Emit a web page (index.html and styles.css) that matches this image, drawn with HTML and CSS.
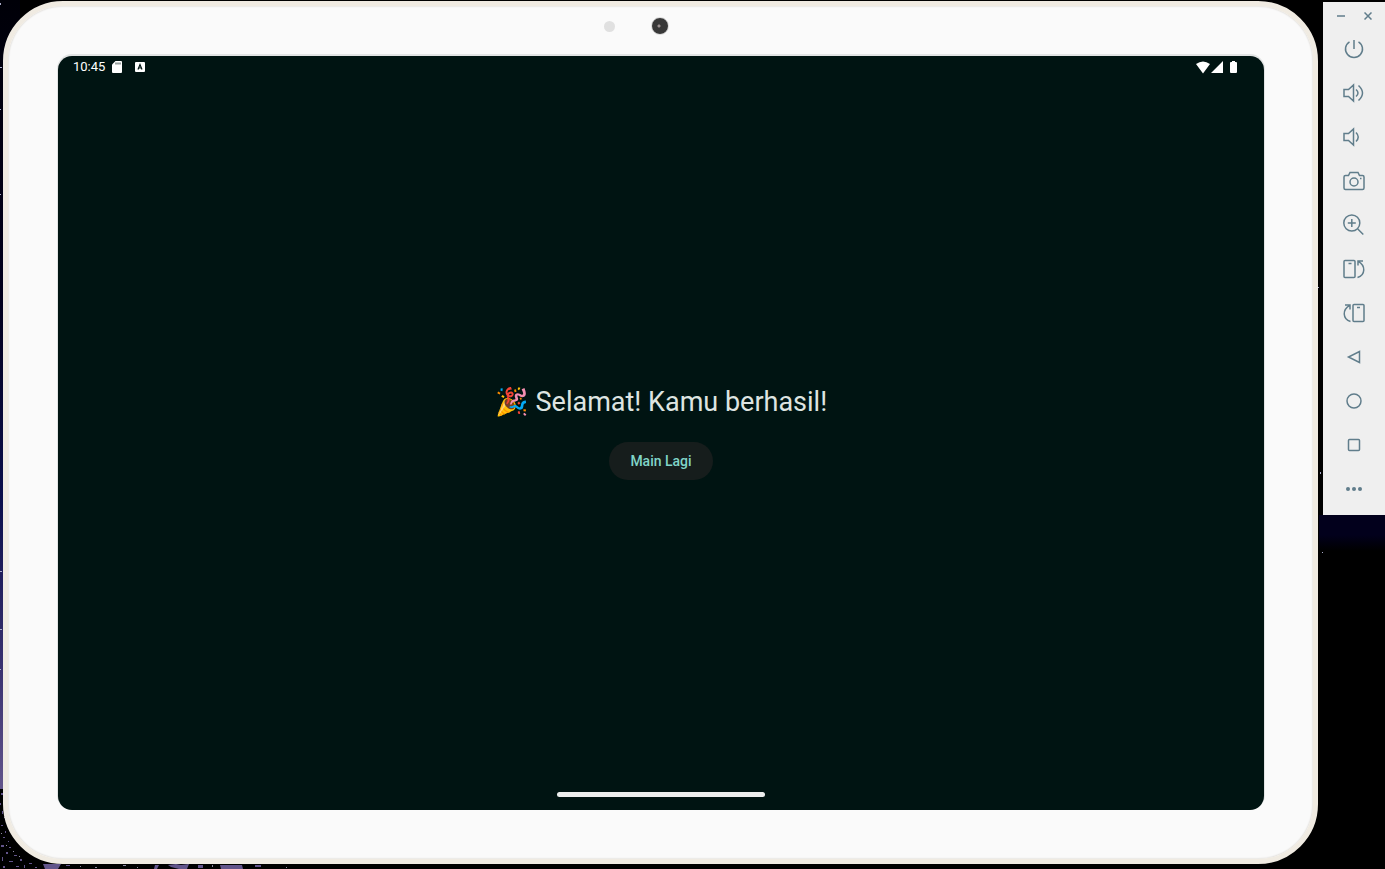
FILE: index.html
```
<!DOCTYPE html>
<html lang="id">
<head>
<meta charset="utf-8">
<title>Emulator</title>
<link rel="stylesheet" href="styles.css">
</head>
<body>
<div class="wallpaper" aria-hidden="true">
  <svg class="ground" viewBox="0 0 1320 84" width="1320" height="84">
    <g fill="#62548a">
      <path d="M43 79h18l-3 5H45zM168 80l8-1 5 1 8-1-2 5h-8l-8-2zM220 80h22l1 4h-22zM198 80h5v3h-5zM155 80h4l-2 4h-3zM66 80h4v1h-4zM255 80h6v2h-6z"/>
      <path d="M1 8h2v2H1zM0 18h1v2H0zM2 26h1v3H2zM1 40h2v1H1zM5 46h1v2H5zM3 52h2v1H3zM8 56h1v1H8zM1 60h3v2H1zM9 62h2v1H9zM6 67h2v2H6zM14 70h3v1h-3zM2 72h1v4H2zM20 74h2v2h-2zM9 76h4v1H9zM29 78h3v1h-3zM16 81h3v1h-3zM35 82h2v1h-2zM3 81h2v2H3zM24 80h1v3h-1z"/>
    </g>
    <g fill="#8c88a0">
      <path d="M4 32h1v1H4zM1 48h1v1H1zM6 60h1v1H6zM13 66h1v1h-1zM19 71h1v1h-1zM80 81h1v1h-1zM95 82h2v1h-2zM123 80h3v1h-3zM137 82h1v1h-1zM212 80h1v2h-1zM286 82h1v1h-1z"/>
    </g>
  </svg>
  <svg class="stars" viewBox="0 0 3 700" width="3" height="700">
    <path fill="#a9abc8" d="M0 3h1v2H0zM0 67h2v1H0zM0 109h1v1H0zM0 194h1v1H0zM0 571h2v1H0zM0 629h2v1H0zM0 669h1v1H0z"/>
  </svg>
  <svg class="stars-right" viewBox="0 0 6 560" width="6" height="560">
    <path fill="#a9abc8" d="M0 287h1v1H0zM2 472h1v2H2zM4 552h1v1H4z"/>
  </svg>
</div>

<main class="tablet">
  <span class="sensor"></span>
  <span class="camera"></span>
  <section class="screen">
    <header class="status">
      <span class="clock">10:45</span>
      <svg class="sd" viewBox="0 0 10 12" width="10" height="12"><path fill="#fff" d="M3.500 0H9q1 0 1 1v10q0 1-1 1H1q-1 0-1-1V3.500z"/><path stroke="#001412" stroke-width=".8" d="M4 1.500v2M6 1.500v2M8 1.500v2"/></svg>
      <svg class="badge" viewBox="0 0 10 10" width="10" height="10"><rect width="10" height="10" rx="1" fill="#fff"/><path d="M3 7.500 5 2.500l2 5M3.700 6h2.600" fill="none" stroke="#001412" stroke-width="1.200"/></svg>
      <svg class="signals" viewBox="0 0 42 13" width="42" height="13" fill="#fff"><path d="M0 3Q7-2 14 3L7 12.500zM27 0v12H15zM35 1h1V0h3v1h1q1 0 1 1v9q0 1-1 1h-5q-1 0-1-1V2q0-1 1-1z"/></svg>
    </header>
    <div class="result">
      <h1 class="message"><span class="emoji">🎉</span> Selamat! Kamu berhasil!</h1>
      <button class="again" type="button">Main Lagi</button>
    </div>
    <div class="home-bar"></div>
  </section>
</main>

<aside class="toolbar">
  <div class="window-controls">
    <button type="button" aria-label="Minimize"><svg viewBox="0 0 8 8" width="8" height="8"><path d="M0 4h8"/></svg></button>
    <button type="button" aria-label="Close"><svg viewBox="0 0 8 8" width="8" height="8"><path d="M.5.5l7 7M7.500.5l-7 7"/></svg></button>
  </div>
  <button class="tool" type="button" aria-label="Power"><svg viewBox="0 0 24 24"><path d="M12 3v9M7.500 4.800a8.500 8.500 0 1 0 9 0"/></svg></button>
  <button class="tool" type="button" aria-label="Volume up"><svg viewBox="0 0 24 24"><path d="M2 8.500h4.500L11.500 4v16l-5-4.500H2zM14 8.500q4 3.500 0 7M16.500 4.500q8 7.500 0 15"/></svg></button>
  <button class="tool" type="button" aria-label="Volume down"><svg viewBox="0 0 24 24"><path d="M2 8.500h4.500L11.500 4v16l-5-4.500H2zM14 7.500q4.500 4.500 0 9"/></svg></button>
  <button class="tool" type="button" aria-label="Screenshot"><svg viewBox="0 0 24 24"><path d="M3.500 6.500h3l1.500-3h8l1.500 3h3q1.500 0 1.500 1.500v11q0 1.500-1.500 1.500h-17Q2 20.500 2 19V8q0-1.500 1.500-1.500z"/><circle cx="12" cy="13" r="4"/><path d="M18 9.500h1.500"/></svg></button>
  <button class="tool" type="button" aria-label="Zoom"><svg viewBox="0 0 24 24"><circle cx="9.800" cy="10" r="8"/><path d="M15.800 16l5.500 5.500M9.800 6v8M5.800 10h8"/></svg></button>
  <button class="tool" type="button" aria-label="Rotate left"><svg viewBox="0 0 24 24"><rect x="2" y="3.500" width="11" height="17" rx="1"/><path d="M6.500 6.500h3M16 8.500V4h5M16 4.300c8 4 7.500 14-.5 16.200"/></svg></button>
  <button class="tool" type="button" aria-label="Rotate right"><svg viewBox="0 0 24 24"><rect x="11" y="3.500" width="11" height="17" rx="1"/><path d="M15 6.500h3M8 8.500V4H3M8 4.300c-8 4-7.500 14 .5 16.200"/></svg></button>
  <button class="tool" type="button" aria-label="Back"><svg viewBox="0 0 24 24"><path d="M17.500 6.500v11L6.500 12z"/></svg></button>
  <button class="tool" type="button" aria-label="Home"><svg viewBox="0 0 24 24"><circle cx="12" cy="12" r="7"/></svg></button>
  <button class="tool" type="button" aria-label="Overview"><svg viewBox="0 0 24 24"><rect x="6.500" y="6.500" width="11" height="11" rx="1"/></svg></button>
  <button class="tool" type="button" aria-label="More"><svg viewBox="0 0 24 24"><g fill="#607d8b" stroke="none"><circle cx="6" cy="12" r="2"/><circle cx="12" cy="12" r="2"/><circle cx="18" cy="12" r="2"/></g></svg></button>
</aside>
</body>
</html>
```
FILE: styles.css
```
* {
  box-sizing: border-box;
}

body {
  display: flex;
  gap: 5px;
  height: 100vh;
  margin: 0;
  padding: 1px 0 5px 3px;
  overflow: hidden;
  background: #000;
  font-family: Roboto, sans-serif;
}

button {
  padding: 0;
  border: 0;
  background: none;
  cursor: pointer;
}

svg {
  display: block;
}

.wallpaper {
  position: absolute;
  inset: 0;
  z-index: -1;
  overflow: hidden;
  background:
    linear-gradient(#02001c, #02001c 20px, #000 36px) right 515px / 66px 60px no-repeat,
    linear-gradient(#000008, #02001c 300px, #0b0f4c 500px, #3a3270 670px, #62548a) left top / 20px 789px no-repeat;
}

.ground {
  position: absolute;
  left: 0;
  bottom: 0;
}

.stars {
  position: absolute;
  left: 0;
  top: 0;
}

.stars-right {
  position: absolute;
  right: 61px;
  top: 0;
}

.tablet {
  position: relative;
  display: flex;
  flex: 1;
  padding: 50px 49px 49px 50px;
  border: 5px solid #f0ebe2;
  border-radius: 60px;
  background: #fafafa;
  box-shadow: inset 0 0 2px #c8c4bc;
}

.sensor,
.camera {
  position: absolute;
  border-radius: 50%;
}

.sensor {
  top: 15px;
  left: calc(50% - 57px);
  width: 11px;
  height: 11px;
  background: #e0e0e0;
}

.camera {
  top: 11px;
  left: calc(50% - 10px);
  width: 18px;
  height: 18px;
  border: 1px solid #dcdcdc;
  background: radial-gradient(circle at 7px 8px, #9a9090 1px, #383838 2px);
}

.screen {
  display: flex;
  flex: 1;
  flex-direction: column;
  border-radius: 14px;
  background: #001412;
  box-shadow: 0 -1px 0 1px #e2e4e4;
}

.status {
  display: flex;
  align-items: center;
  height: 22px;
  padding: 0 26px 0 15px;
  color: #fff;
  font-size: 13px;
  line-height: 22px;
}

.sd {
  margin-left: 7px;
}

.badge {
  margin-left: 13px;
}

.signals {
  margin-left: auto;
}

.result {
  display: flex;
  flex: 1;
  flex-direction: column;
  align-items: center;
  justify-content: center;
  gap: 22px;
  padding-bottom: 6px;
}

.message {
  margin: 0;
  color: #dee4e1;
  font-size: 27px;
  font-weight: 400;
  line-height: 36px;
}

.again {
  height: 38px;
  padding: 0 21px;
  border-radius: 19px;
  background: #161d1c;
  color: #80d5c8;
  font: 500 14px/18px Roboto, sans-serif;
}

.home-bar {
  align-self: center;
  width: 208px;
  height: 5px;
  margin-bottom: 13px;
  border-radius: 3px;
  background: #eceeed;
}

.toolbar {
  align-self: flex-start;
  display: flex;
  flex-direction: column;
  width: 62px;
  margin-top: 1px;
  padding-bottom: 4px;
  background: #efefef;
}

.toolbar svg {
  fill: none;
  stroke: #607d8b;
  stroke-width: 1.500;
}

.window-controls {
  display: flex;
  justify-content: space-between;
  height: 25px;
  padding: 0 13px 0 14px;
}

.window-controls button {
  height: 28px;
}

.tool {
  display: grid;
  place-items: center;
  height: 44px;
}

.tool svg {
  width: 24px;
  height: 24px;
}
```
